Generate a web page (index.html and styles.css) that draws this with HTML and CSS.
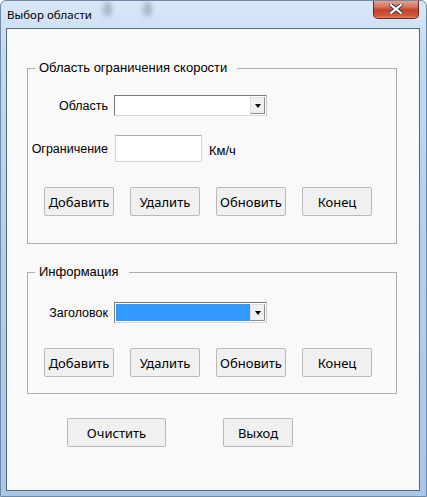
FILE: index.html
```html
<!DOCTYPE html>
<html lang="ru">
<head>
<meta charset="utf-8">
<title>Выбор области</title>
<link rel="stylesheet" href="styles.css">
</head>
<body>
<div class="window">
  <div class="titlebar">
    <span class="title">Выбор области</span>
    <span class="glass g1"></span>
    <span class="glass g2"></span>
    <div class="close" aria-label="Закрыть">
      <svg width="14" height="10" viewBox="0 0 14 10">
        <path d="M2 1 L12 9 M12 1 L2 9" stroke="#3b3b3b" stroke-width="4" stroke-linecap="square" fill="none"/>
        <path d="M2 1 L12 9 M12 1 L2 9" stroke="#ffffff" stroke-width="2.2" stroke-linecap="square" fill="none"/>
      </svg>
    </div>
  </div>
  <div class="client">
    <fieldset class="group">
      <legend>Область ограничения скорости</legend>
      <div class="gbody gbody-1">
        <div class="row row-combo">
          <span class="lbl">Область</span>
          <div class="combo"><span class="combo-val"></span><span class="combo-btn"><i class="tri"></i></span></div>
        </div>
        <div class="row row-text">
          <span class="lbl">Ограничение</span>
          <div class="textbox"></div>
          <span class="unit">Км/ч</span>
        </div>
        <div class="btnrow">
          <button class="btn">Добавить</button>
          <button class="btn">Удалить</button>
          <button class="btn">Обновить</button>
          <button class="btn">Конец</button>
        </div>
      </div>
    </fieldset>
    <fieldset class="group group-2">
      <legend>Информация</legend>
      <div class="gbody gbody-2">
        <div class="row row-combo">
          <span class="lbl">Заголовок</span>
          <div class="combo"><span class="combo-val selected"></span><span class="combo-btn"><i class="tri"></i></span></div>
        </div>
        <div class="btnrow">
          <button class="btn">Добавить</button>
          <button class="btn">Удалить</button>
          <button class="btn">Обновить</button>
          <button class="btn">Конец</button>
        </div>
      </div>
    </fieldset>
    <div class="footer">
      <button class="btn btn-wide">Очистить</button>
      <button class="btn">Выход</button>
    </div>
  </div>
</div>
</body>
</html>
```
FILE: styles.css
```css
html, body {
  margin: 0;
  padding: 0;
  background: #ffffff;
}

.window {
  position: relative;
  width: 427px;
  height: 497px;
  box-sizing: border-box;
  border: 1px solid #6f8aa6;
  border-radius: 6px 6px 0 0;
  background: linear-gradient(180deg, #d9e8f7 0%, #c4daf1 10%, #b3cfec 50%, #a9c8e8 100%);
  overflow: hidden;
}

.titlebar {
  height: 27px;
  display: flex;
  align-items: center;
  padding-left: 6px;
}

.title {
  font-family: "Noto Sans", sans-serif;
  font-size: 11.5px;
  color: #000;
  padding-bottom: 1px;
}

.glass {
  position: absolute;
  top: 1px;
  width: 9px;
  height: 14px;
  background: #7f8e9f;
  filter: blur(2.5px);
  opacity: 0.55;
  border-radius: 40%;
}
.g1 { left: 102px; }
.g2 { left: 142px; }

.close {
  position: absolute;
  left: 372px;
  top: -1px;
  width: 46px;
  height: 19px;
  box-sizing: border-box;
  border: 1px solid #6c2a1f;
  border-top: none;
  border-radius: 0 0 5px 5px;
  background: linear-gradient(180deg, #e9a999 0%, #d7705a 40%, #c3432a 55%, #d2563a 85%, #e38064 100%);
  display: flex;
  align-items: center;
  justify-content: center;
}

.client {
  margin: 0 6px 0 5px;
  height: 463px;
  box-sizing: border-box;
  border: 1px solid #56687b;
  background: #f9f9f9;
  padding: 31px 0 0 20px;
}

.group {
  margin: 0;
  padding: 0;
  width: 370px;
  box-sizing: border-box;
  border: 1px solid #adadad;
  min-inline-size: 0;
}

.group-2 {
  margin-top: 20px;
}

legend {
  font-family: "Liberation Sans", Arial, sans-serif;
  font-size: 13px;
  line-height: 16px;
  color: #000;
  padding: 0 10px 0 4px;
  margin-left: 7px;
}

.gbody-1 {
  padding: 19px 0 27px 0;
}

.gbody-2 {
  padding: 22px 0 16px 0;
}

.row {
  display: flex;
  align-items: center;
}

.row-combo { height: 21px; }
.row-text { height: 27px; margin-top: 19px; }

.lbl {
  width: 80px;
  margin-right: 6px;
  text-align: right;
  font-family: "Liberation Sans", Arial, sans-serif;
  font-size: 12.5px;
  color: #000;
}

.combo {
  width: 153px;
  height: 21px;
  box-sizing: border-box;
  border: 1px solid;
  border-color: #7a7a7a #c9c9c9 #d6d6d6 #7a7a7a;
  background: #ffffff;
  display: flex;
  padding: 1px;
}

.combo-val {
  flex: 1;
}

.combo-val.selected {
  background: #3399ff;
}

.combo-btn {
  width: 15px;
  box-sizing: border-box;
  border: 1px solid;
  border-color: #dedede #8a8a8a #8a8a8a #dedede;
  background: #f0f0f0;
  display: flex;
  align-items: center;
  justify-content: center;
}

.tri {
  width: 0;
  height: 0;
  border-left: 3.5px solid transparent;
  border-right: 3.5px solid transparent;
  border-top: 4px solid #000;
  margin-top: 1px;
}

.textbox {
  width: 87px;
  height: 27px;
  box-sizing: border-box;
  margin-left: 1px;
  border: 1px solid #d0d3d8;
  border-top-color: #a9abb0;
  background: #ffffff;
}

.unit {
  margin-left: 7px;
  font-family: "Liberation Sans", Arial, sans-serif;
  font-size: 13px;
  color: #000;
  padding-top: 3px;
}

.btnrow {
  display: flex;
  gap: 16px;
  padding-left: 16px;
  margin-top: 25px;
}

.btn {
  width: 70px;
  height: 29px;
  box-sizing: border-box;
  padding: 0;
  margin: 0;
  border: 1px solid #b9b9b9;
  border-radius: 2px;
  background: #f0f0f0;
  font-family: "Noto Sans", sans-serif;
  font-size: 13px;
  color: #000;
  white-space: nowrap;
}

.footer {
  display: flex;
  gap: 57px;
  margin: 24px 0 0 40px;
}

.btn-wide {
  width: 99px;
}
```
